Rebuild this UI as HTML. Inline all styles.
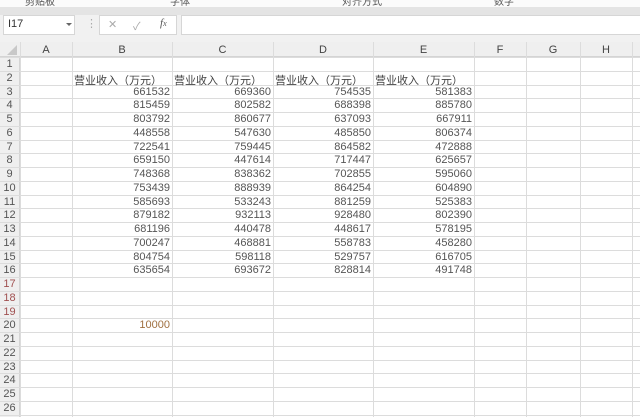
<!DOCTYPE html><html><head><meta charset="utf-8"><style>
body{margin:0;width:640px;height:417px;overflow:hidden;background:#fff;font-family:"Liberation Sans","Noto Sans CJK SC",sans-serif;position:relative}
.a{position:absolute}
.t{font-size:11px;color:#555;white-space:nowrap}
</style></head><body>
<div class="a" style="left:0;top:0;width:640px;height:7px;background:#fbfbfb"></div>
<div class="a t" style="left:25px;top:-7px;font-size:10px;color:#555">剪贴板</div>
<div class="a t" style="left:170px;top:-7px;font-size:10px;color:#555">字体</div>
<div class="a t" style="left:342px;top:-7px;font-size:10px;color:#555">对齐方式</div>
<div class="a t" style="left:494px;top:-7px;font-size:10px;color:#555">数字</div>
<div class="a" style="left:0;top:7px;width:640px;height:8px;background:#e4e4e4"></div>
<div class="a" style="left:0;top:15px;width:640px;height:27px;background:#f1f1f1"></div>
<div class="a" style="left:3px;top:15px;width:72px;height:20px;background:#fff;border:1px solid #d6d6d6;box-sizing:border-box"></div>
<div class="a t" style="left:8px;top:18px;color:#333">I17</div>
<div class="a" style="left:66px;top:23px;width:0;height:0;border-left:3px solid transparent;border-right:3px solid transparent;border-top:3px solid #666"></div>
<div class="a t" style="left:86px;top:17px;color:#aaa">⋮</div>
<div class="a" style="left:99px;top:15px;width:78px;height:20px;background:#fff;border:1px solid #d6d6d6;box-sizing:border-box"></div>
<div class="a t" style="left:108px;top:18px;color:#aaa">✕</div>
<div class="a t" style="left:133px;top:18px;color:#aaa">✓</div>
<div class="a t" style="left:160px;top:17px;color:#555;font-family:'Liberation Serif',serif;font-style:italic">f<span style="font-size:8px">x</span></div>
<div class="a" style="left:181px;top:15px;width:470px;height:20px;background:#fff;border:1px solid #d6d6d6;box-sizing:border-box"></div>
<div class="a" style="left:0;top:42px;width:640px;height:15px;background:#efefef;border-bottom:1px solid #d4d4d4;box-sizing:border-box"></div>
<div class="a" style="left:0;top:57px;width:20px;height:360px;background:#efefef;border-right:1px solid #d4d4d4;box-sizing:border-box"></div>
<svg class="a" style="left:0;top:0" width="640" height="417">
<polygon points="17,45 17,55 7,55" fill="#c8c8c8"/>
<g stroke="#dcdcdc" stroke-width="1" id="g"></g>
</svg>
<div id="c"></div>
<script>
var cols=[20,72,172,273,373,474,526,580,632],names="ABCDEFGH";
var g=document.getElementById('g'),h='';
for(var i=0;i<cols.length;i++){h+='<line x1="'+(cols[i]+.5)+'" y1="42" x2="'+(cols[i]+.5)+'" y2="417"/>';}
var rh=13.75,top0=57;
for(var r=0;r<=26;r++){var y=Math.round(top0+r*rh)+.5;h+='<line x1="0" y1="'+y+'" x2="640" y2="'+y+'"/>';}
g.innerHTML=h;
var s='';
for(var i=0;i<8;i++){s+='<div class="a t" style="left:'+cols[i]+'px;width:'+(cols[i+1]-cols[i])+'px;text-align:center;top:44px;color:#444">'+names[i]+'</div>';}
for(var r=1;r<=26;r++){var y=top0+(r-1)*rh+1;s+='<div class="a t" style="left:0;width:19px;text-align:center;top:'+(y)+'px;color:'+(r>=17&&r<=19?'#a05050':'#555')+'">'+r+'</div>';}
var d=[[661532,669360,754535,581383],[815459,802582,688398,885780],[803792,860677,637093,667911],[448558,547630,485850,806374],[722541,759445,864582,472888],[659150,447614,717447,625657],[748368,838362,702855,595060],[753439,888939,864254,604890],[585693,533243,881259,525383],[879182,932113,928480,802390],[681196,440478,448617,578195],[700247,468881,558783,458280],[804754,598118,529757,616705],[635654,693672,828814,491748]];
for(var c=0;c<4;c++){s+='<div class="a t" style="left:'+(cols[c+1]+2)+'px;top:'+(top0+rh+1)+'px;color:#444">营业收入（万元）</div>';}
for(var r=0;r<d.length;r++)for(var c=0;c<4;c++){s+='<div class="a t" style="left:'+cols[c+1]+'px;width:'+(cols[c+2]-cols[c+1]-2)+'px;text-align:right;top:'+(top0+(r+2)*rh+1)+'px">'+d[r][c]+'</div>';}
s+='<div class="a t" style="left:72px;width:98px;text-align:right;top:'+(top0+19*rh+1)+'px;color:#a07040">10000</div>';
document.getElementById('c').innerHTML=s;
</script>
</body></html>
